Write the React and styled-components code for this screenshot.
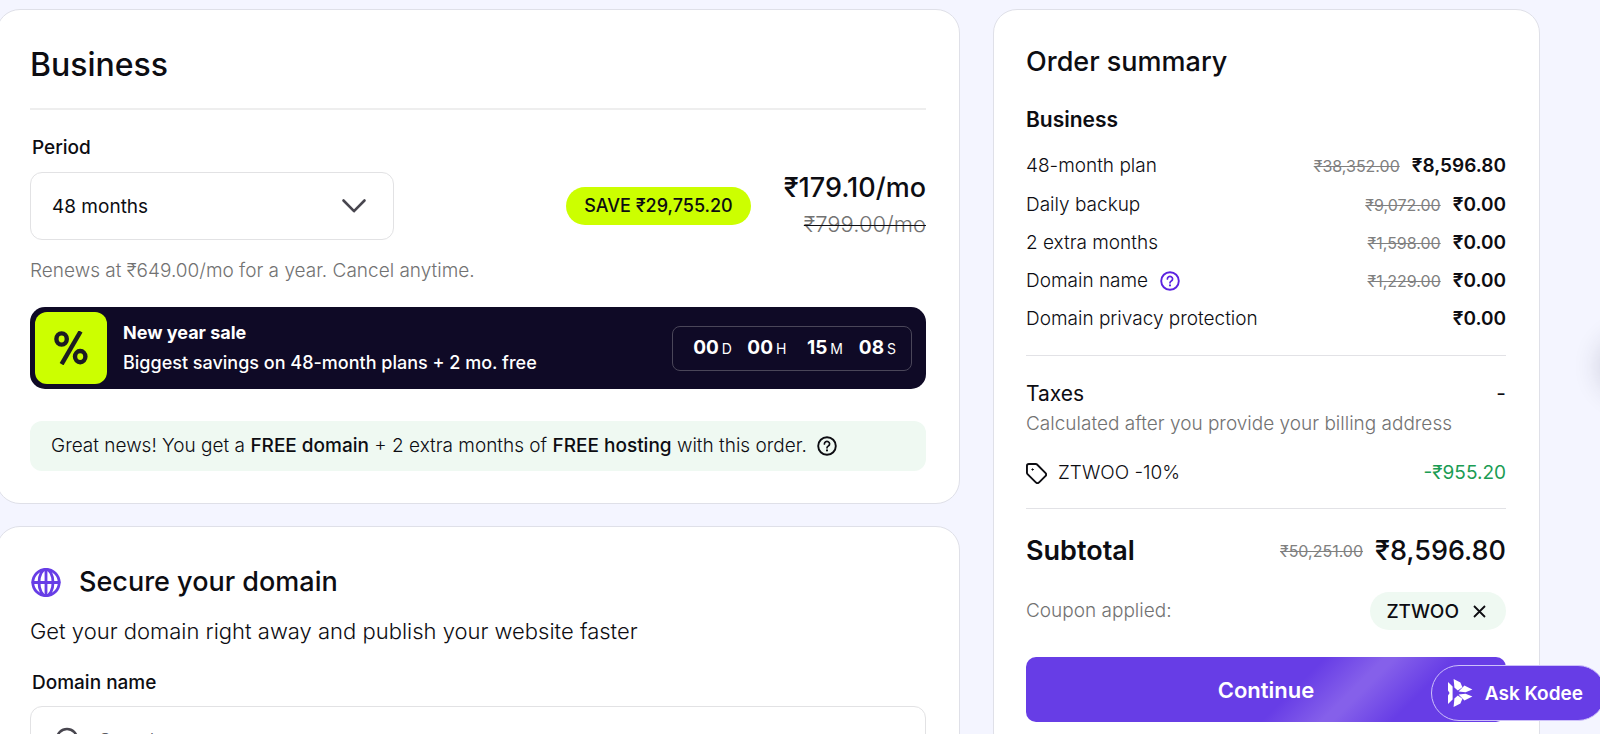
import React from "react";
import styled, { createGlobalStyle } from "styled-components";

const GlobalStyle = createGlobalStyle`
  *, *::before, *::after { box-sizing: border-box; }
  body {
    margin: 0;
    background: #f4f5ff;
    color: #0d0d12;
    font-family: Inter, "Liberation Sans", sans-serif;
    font-size: 19px;
    font-weight: 300;
  }
  h1, h2, h3, p, ul { margin: 0; padding: 0; }
  ul { list-style: none; }
  button, input, select { font: inherit; color: inherit; }
`;

const Page = styled.div`
  height: 100vh;
  overflow: hidden;
  padding: 9px 60px 0 0;
  margin-left: -4px;
`;

const Columns = styled.div`
  display: grid;
  grid-template-columns: minmax(0, 964fr) minmax(0, 547fr);
  gap: 33px;
  align-items: start;
`;

const Main = styled.main`
  display: flex;
  flex-direction: column;
  gap: 22px;
`;

const Card = styled.section`
  background: #fff;
  border: 1px solid #dfe0e8;
  border-radius: 24px;
  padding: 35px 33px 32px;
`;

const SummaryCard = styled(Card).attrs({ as: "aside" })`
  padding: 34px 33px 34px 32px;
`;

const Title = styled.h1`
  font-size: 32px;
  font-weight: 500;
  line-height: 40px;
  padding-bottom: 23px;
  border-bottom: 2px solid #eeeeee;
`;

const Heading = styled.h2`
  display: flex;
  align-items: center;
  gap: 18px;
  font-size: 27px;
  font-weight: 500;
  line-height: ${(p) => (p.$compact ? "36px" : "40px")};
`;

const Label = styled.label`
  display: block;
  margin-top: ${(p) => p.$gap || "24px"};
  padding-left: 2px;
  font-weight: 500;
  line-height: 24px;
`;

const PeriodRow = styled.div`
  display: flex;
  align-items: center;
  justify-content: space-between;
  margin-top: 10px;
`;

const SelectBox = styled.div`
  position: relative;
  flex: 0 1 364px;
  min-width: 200px;
  svg {
    position: absolute;
    right: 27px;
    top: 50%;
    transform: translateY(-50%);
    pointer-events: none;
  }
`;

const Select = styled.select`
  appearance: none;
  width: 100%;
  height: 68px;
  padding: 0 60px 0 21px;
  border: 1px solid #e2e2e4;
  border-radius: 12px;
  background: #fff;
  font-weight: 400;
`;

const Offer = styled.div`
  display: flex;
  align-items: center;
  gap: 33px;
`;

const SavePill = styled.span`
  padding: 0 18px;
  border-radius: 19px;
  background: #ccff00;
  font-size: 18px;
  font-weight: 500;
  line-height: 38px;
  white-space: nowrap;
`;

const PlanPrice = styled.div`
  display: flex;
  flex-direction: column;
  align-items: flex-end;
  line-height: 36px;
  strong { font-size: 27px; font-weight: 500; }
  del {
    font-size: 22px;
    color: #727272;
    text-decoration: line-through #0d0d12 1px;
  }
`;

const Muted = styled.p`
  color: #727272;
  line-height: 30px;
`;

const Renewal = styled(Muted)`
  margin: 14px 0 21px;
`;

const SaleBanner = styled.div`
  display: flex;
  align-items: center;
  gap: 16px;
  padding: 5px 14px 5px 5px;
  border-radius: 15px;
  background: #0f0a26;
  color: #fff;
`;

const SaleBadge = styled.div`
  display: grid;
  place-items: center;
  width: 72px;
  height: 72px;
  border-radius: 12px;
  background: #ccff00;
`;

const SaleText = styled.p`
  flex: 1;
  font-size: 18px;
  font-weight: 500;
  line-height: 30px;
  strong { display: block; font-weight: 700; }
`;

const Countdown = styled.div`
  display: flex;
  gap: 15px;
  padding: 0 15px 0 20px;
  border: 1px solid #4a4659;
  border-radius: 8px;
  line-height: 42px;
`;

const Unit = styled.span`
  display: flex;
  align-items: baseline;
  gap: 3px;
  font-size: 14px;
  font-weight: 400;
  b {
    min-width: 26px;
    text-align: right;
    font-size: 19px;
    font-weight: 700;
  }
`;

const Note = styled.p`
  display: flex;
  align-items: center;
  gap: 10px;
  margin-top: 32px;
  padding: 10px 21px;
  border-radius: 12px;
  background: #eff9f2;
  line-height: 30px;
  strong { font-weight: 500; }
`;

const Lead = styled.p`
  margin-top: 13px;
  font-size: 22px;
  line-height: 32px;
`;

const SearchField = styled.div`
  display: flex;
  align-items: center;
  gap: 18px;
  height: 68px;
  margin-top: 11px;
  padding: 0 24px;
  border: 1px solid #e2e2e4;
  border-radius: 12px;
`;

const SearchInput = styled.input`
  flex: 1;
  min-width: 0;
  padding: 0;
  border: 0;
  outline: 0;
  background: none;
  &::placeholder { color: #5b5b62; opacity: 1; }
`;

const PlanName = styled.h3`
  margin: 25px 0 12px;
  font-size: 21px;
  font-weight: 600;
  line-height: 30px;
`;

const Line = styled.li`
  display: flex;
  align-items: center;
  justify-content: space-between;
  line-height: 26px;
  padding: 6px 0;
  & + & { padding-top: 7px; }
  & + & + & { padding-top: 6px; }
`;

const Name = styled.span`
  display: flex;
  align-items: center;
  gap: 12px;
`;

const Amount = styled.span`
  display: flex;
  align-items: center;
  gap: 12px;
  del { font-size: 16px; font-weight: 400; color: #808080; }
  strong { font-weight: 600; }
`;

const Rule = styled.hr`
  margin: ${(p) => p.$top} 0 23px;
  border: 0;
  border-top: 1px solid #e2e2e6;
`;

const Row = styled.div`
  display: flex;
  align-items: center;
  justify-content: space-between;
`;

const Taxes = styled(Row)`
  font-size: 21px;
  font-weight: 400;
  line-height: 30px;
`;

const Discount = styled(Row)`
  margin-top: 20px;
  line-height: 28px;
  ${Name} { gap: 11px; }
`;

const Saved = styled.span`
  color: #1b9c54;
  font-weight: 400;
`;

const Subtotal = styled(Row)`
  line-height: 38px;
  font-size: 27px;
  font-weight: 600;
  strong { font-weight: 500; }
`;

const Coupon = styled(Row)`
  margin-top: 22px;
`;

const CouponChip = styled.button`
  display: flex;
  align-items: center;
  gap: 14px;
  height: 38px;
  padding: 0 20px 0 16px;
  border: 0;
  border-radius: 19px;
  background: #eff9f2;
  font-weight: 500;
`;

const ContinueButton = styled.button`
  display: block;
  width: 100%;
  height: 65px;
  margin-top: 27px;
  border: 0;
  border-radius: 10px;
  background: linear-gradient(135deg, #673de6 55%, #8560ea 66%, #8560ea 68%, #673de6 79%);
  color: #fff;
  font-size: 22px;
  font-weight: 600;
`;

const AskButton = styled.button`
  position: fixed;
  right: -6px;
  bottom: 13px;
  display: flex;
  align-items: center;
  gap: 12px;
  height: 56px;
  padding: 0 22px 0 15px;
  border: 1px solid #cdc0fa;
  border-radius: 28px;
  background: #673de6;
  color: #fff;
  font-weight: 600;
`;

const SideHandle = styled.div`
  position: fixed;
  right: -62px;
  top: 334px;
  width: 60px;
  height: 56px;
  border-radius: 28px;
  background: #fff;
  box-shadow: 0 4px 26px 4px rgba(40, 40, 70, 0.16);
`;

const Icon = ({ size, children, ...rest }) => (
  <svg width={size} height={size} fill="none" stroke="currentColor" strokeLinecap="round" strokeLinejoin="round" aria-hidden="true" {...rest}>
    {children}
  </svg>
);

const HelpIcon = ({ color = "#0d0d12" }) => (
  <Icon size={20} viewBox="0 0 20 20" stroke={color} strokeWidth="1.9">
    <circle cx="10" cy="10" r="8.8" />
    <path d="M7.4 7.9a2.6 2.4 0 1 1 4 2c-.9.6-1.4 1-1.4 1.9" strokeWidth="1.7" />
    <circle cx="10" cy="14.4" r=".5" fill={color} strokeWidth="1.1" />
  </Icon>
);

const ChevronIcon = () => (
  <Icon width={26} height={16} viewBox="0 0 26 16" stroke="#48464f" strokeWidth="2.6">
    <path d="M2.5 2.5 13 13.2 23.5 2.5" />
  </Icon>
);

const PercentIcon = () => (
  <Icon size={34} viewBox="0 0 34 34" stroke="#1c1c22" strokeWidth="4.4" strokeLinecap="butt">
    <ellipse cx="7.6" cy="8" rx="5.2" ry="5.6" />
    <ellipse cx="26.2" cy="25.6" rx="5.2" ry="5.6" />
    <path d="M26.6.4 7.6 33.2" />
  </Icon>
);

const GlobeIcon = () => (
  <Icon size={31} viewBox="0 0 31 31" stroke="#673de6" strokeWidth="2.8">
    <circle cx="16" cy="15.5" r="13.2" />
    <ellipse cx="16" cy="15.5" rx="7" ry="13.2" />
    <path d="M16 2.3v26.4M2.8 15.5h26.4" />
  </Icon>
);

const SearchIcon = () => (
  <Icon size={26} viewBox="0 0 26 26" stroke="#48464f" strokeWidth="2.6">
    <circle cx="12" cy="12" r="10" />
    <path d="m19 19 5.5 5.5" />
  </Icon>
);

const TagIcon = () => (
  <Icon size={21} viewBox="1 1 22 22" strokeWidth="2">
    <path d="M12.586 2.586A2 2 0 0 0 11.172 2H4a2 2 0 0 0-2 2v7.172a2 2 0 0 0 .586 1.414l8.704 8.704a2.426 2.426 0 0 0 3.42 0l6.58-6.58a2.426 2.426 0 0 0 0-3.42z" />
    <circle cx="7.8" cy="7.8" r=".7" fill="currentColor" strokeWidth="1" />
  </Icon>
);

const CloseIcon = () => (
  <Icon size={13} viewBox="0 0 13 13" strokeWidth="1.8" strokeLinecap="butt">
    <path d="m1 1 11 11M12 1 1 12" />
  </Icon>
);

const KodeeIcon = () => (
  <svg width="26" height="30" viewBox="0 0 26 30" fill="#fff" aria-hidden="true">
    <path d="M1 4 5.6 8.4v13.2L1 26v-8.4L2.6 15 1 12.4z" />
    <path d="M6.6 1 13.4 4.6l2 4.6-4.6 3.4L7.4 9.4z" />
    <path d="M6.6 29 13.4 25.4l2-4.6-4.6-3.4-3.4 3.2z" />
    <path d="M11.6 13.4 17.4 7.6 25.4 11.6 18.6 14.2z" />
    <path d="M11.6 16.6 17.4 22.4 25.4 18.4 18.6 15.8z" />
  </svg>
);

const LINES = [
  { name: "48-month plan", was: "₹38,352.00", now: "₹8,596.80" },
  { name: "Daily backup", was: "₹9,072.00", now: "₹0.00" },
  { name: "2 extra months", was: "₹1,598.00", now: "₹0.00" },
  { name: "Domain name", was: "₹1,229.00", now: "₹0.00", help: true },
  { name: "Domain privacy protection", now: "₹0.00" },
];

const TIME_LEFT = [["00", "D"], ["00", "H"], ["15", "M"], ["08", "S"]];

export default function App() {
  return (
    <>
      <GlobalStyle />
      <Page>
        <Columns>
          <Main>
            <Card>
              <Title>Business</Title>
              <Label htmlFor="period" $gap="26px">Period</Label>
              <PeriodRow>
                <SelectBox>
                  <Select id="period" defaultValue="48">
                    <option value="48">48 months</option>
                  </Select>
                  <ChevronIcon />
                </SelectBox>
                <Offer>
                  <SavePill>SAVE ₹29,755.20</SavePill>
                  <PlanPrice>
                    <strong>₹179.10/mo</strong>
                    <del>₹799.00/mo</del>
                  </PlanPrice>
                </Offer>
              </PeriodRow>
              <Renewal>Renews at ₹649.00/mo for a year. Cancel anytime.</Renewal>
              <SaleBanner>
                <SaleBadge><PercentIcon /></SaleBadge>
                <SaleText>
                  <strong>New year sale</strong>
                  Biggest savings on 48-month plans + 2 mo. free
                </SaleText>
                <Countdown>
                  {TIME_LEFT.map(([value, unit]) => (
                    <Unit key={unit}><b>{value}</b>{unit}</Unit>
                  ))}
                </Countdown>
              </SaleBanner>
              <Note>
                <span>
                  Great news! You get a <strong>FREE domain</strong> + 2 extra months of{" "}
                  <strong>FREE hosting</strong> with this order.
                </span>
                <HelpIcon />
              </Note>
            </Card>
            <Card>
              <Heading><GlobeIcon />Secure your domain</Heading>
              <Lead>Get your domain right away and publish your website faster</Lead>
              <Label htmlFor="domain">Domain name</Label>
              <SearchField>
                <SearchIcon />
                <SearchInput id="domain" type="text" placeholder="Search" />
              </SearchField>
            </Card>
          </Main>
          <SummaryCard>
            <Heading $compact>Order summary</Heading>
            <PlanName>Business</PlanName>
            <ul>
              {LINES.map(({ name, was, now, help }) => (
                <Line key={name}>
                  <Name>{name}{help && <HelpIcon color="#5b22e0" />}</Name>
                  <Amount>{was && <del>{was}</del>}<strong>{now}</strong></Amount>
                </Line>
              ))}
            </ul>
            <Rule $top="17px" />
            <Taxes><span>Taxes</span><span>-</span></Taxes>
            <Muted>Calculated after you provide your billing address</Muted>
            <Discount>
              <Name><TagIcon />ZTWOO -10%</Name>
              <Saved>-₹955.20</Saved>
            </Discount>
            <Rule $top="21px" />
            <Subtotal>
              <span>Subtotal</span>
              <Amount><del>₹50,251.00</del><strong>₹8,596.80</strong></Amount>
            </Subtotal>
            <Coupon>
              <Muted>Coupon applied:</Muted>
              <CouponChip type="button">ZTWOO<CloseIcon /></CouponChip>
            </Coupon>
            <ContinueButton type="button">Continue</ContinueButton>
          </SummaryCard>
        </Columns>
      </Page>
      <SideHandle />
      <AskButton type="button"><KodeeIcon />Ask Kodee</AskButton>
    </>
  );
}
